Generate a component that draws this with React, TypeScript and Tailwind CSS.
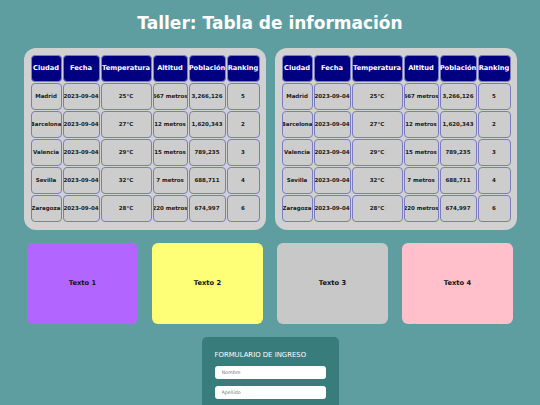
import React from "react";

const headers = ["Ciudad", "Fecha", "Temperatura", "Altitud", "Población", "Ranking"];
const rows = [
  ["Madrid", "2023-09-04", "25°C", "667 metros", "3,266,126", "5"],
  ["Barcelona", "2023-09-04", "27°C", "12 metros", "1,620,343", "2"],
  ["Valencia", "2023-09-04", "29°C", "15 metros", "789,235", "3"],
  ["Sevilla", "2023-09-04", "32°C", "7 metros", "688,711", "4"],
  ["Zaragoza", "2023-09-04", "28°C", "220 metros", "674,997", "6"],
];

function Panel() {
  return (
    <div className="w-[242px] shrink-0 bg-[#d1d1d1] rounded-[12px] pt-[7px] pb-[8px] pl-[7px] pr-[6px]">
      <div className="grid grid-cols-[31px_37px_51px_35px_37px_33px] auto-rows-[27px] gap-[1px]">
        {headers.map((h) => (
          <div
            key={h}
            className="flex items-center justify-center rounded-[4px] border border-[#7b7bc0] bg-[#000080] text-white font-bold text-[6.7px] whitespace-nowrap"
          >
            {h}
          </div>
        ))}
        {rows.map((r, i) =>
          r.map((c, j) => (
            <div
              key={i + "-" + j}
              className="flex items-center justify-center rounded-[4px] border border-[#7b7bc0] bg-[#cdcdcd] text-[#1a1a1a] font-bold text-[5.5px] whitespace-nowrap overflow-hidden"
            >
              {c}
            </div>
          ))
        )}
      </div>
    </div>
  );
}

export default function App() {
  return (
    <div
      className="w-[540px] h-[405px] overflow-hidden bg-[#5f9ea0] flex flex-col items-center"
      style={{ fontFamily: '"DejaVu Sans", Verdana, sans-serif' }}
    >
      <div className="h-[47px] shrink-0 flex items-center justify-center text-white font-bold text-[17px]">
        Taller: Tabla de información
      </div>
      <div className="flex shrink-0 gap-[9px] mt-[1px]">
        <Panel />
        <Panel />
      </div>
      <div className="flex shrink-0 gap-[14px] mt-[13px]">
        <div className="w-[111px] h-[81px] rounded-[6px] bg-[#b266ff] flex items-center justify-center font-bold text-[6.7px] text-[#111]">
          Texto 1
        </div>
        <div className="w-[111px] h-[81px] rounded-[6px] bg-[#ffff77] flex items-center justify-center font-bold text-[6.7px] text-[#111]">
          Texto 2
        </div>
        <div className="w-[111px] h-[81px] rounded-[6px] bg-[#c8c8c8] flex items-center justify-center font-bold text-[6.7px] text-[#111]">
          Texto 3
        </div>
        <div className="w-[111px] h-[81px] rounded-[6px] bg-[#ffc0cb] flex items-center justify-center font-bold text-[6.7px] text-[#111]">
          Texto 4
        </div>
      </div>
      <div className="mt-[13px] shrink-0 w-[137px] bg-[#387c7c] rounded-[5px] px-[13px] pt-[13px] pb-[14px] flex flex-col">
        <div className="text-white text-[6.9px] leading-[10px] whitespace-nowrap">FORMULARIO DE INGRESO</div>
        <input
          className="mt-[6px] h-[13px] w-full rounded-[3px] bg-white px-[7px] text-[4.8px] outline-none placeholder:text-[#777]"
          placeholder="Nombre"
        />
        <input
          className="mt-[7px] h-[13px] w-full rounded-[3px] bg-white px-[7px] text-[4.8px] outline-none placeholder:text-[#777]"
          placeholder="Apellido"
        />
      </div>
    </div>
  );
}
